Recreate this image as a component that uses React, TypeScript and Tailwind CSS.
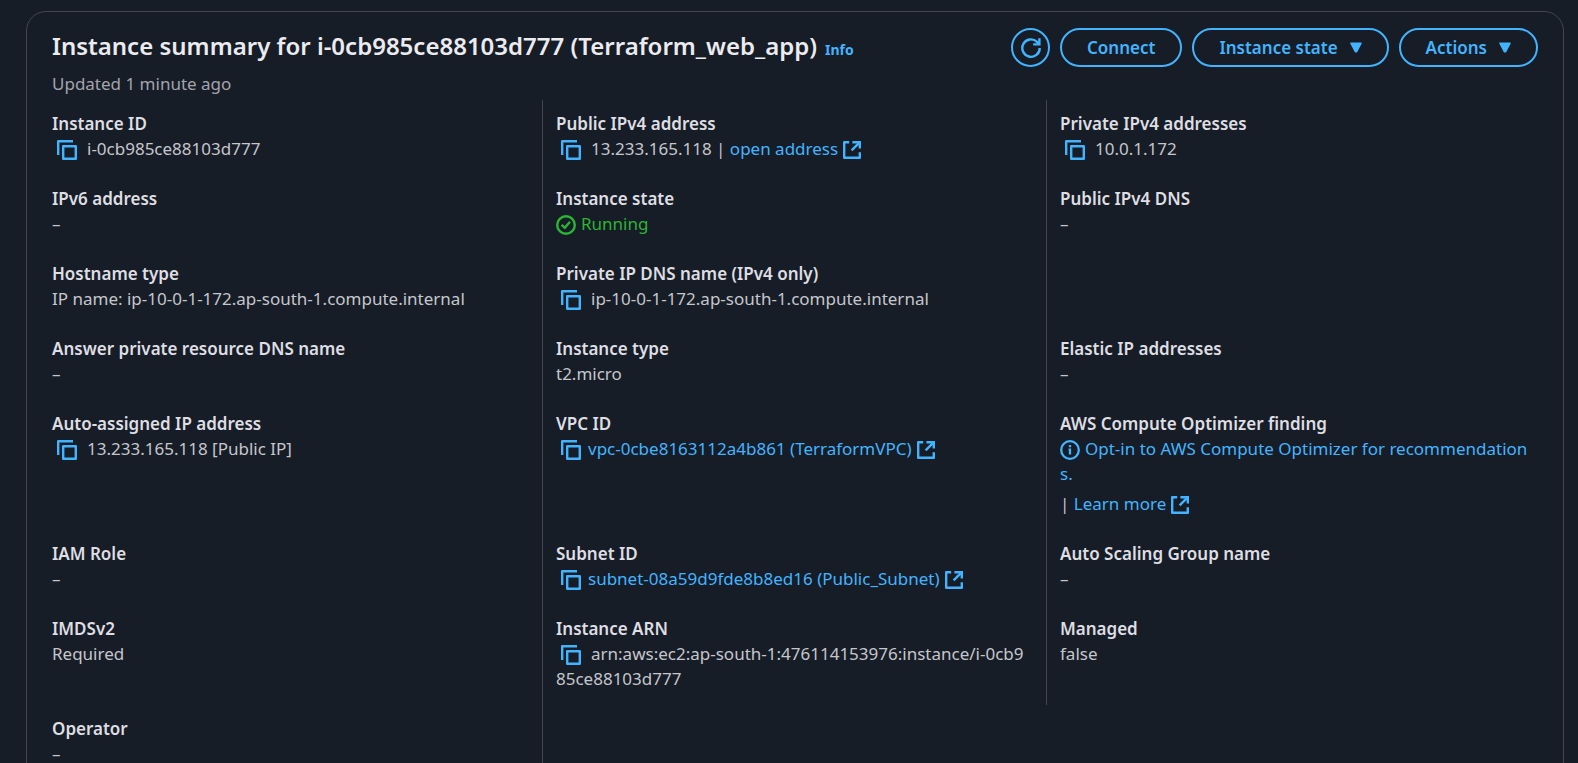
import type { ReactNode } from 'react';

function CopyButton({ label }: { label: string }) {
  return (
    <button type="button" aria-label={`Copy ${label}`} className="ml-[5px] inline-block size-5 align-[-5px] text-[#42b4ff]">
      <svg viewBox="0 0 20 20" fill="none" stroke="currentColor" strokeWidth="2.4" strokeLinejoin="round" className="block size-5">
        <path d="M1.2 15V1.2H16" />
        <path d="M6.2 6.2h12.6v12.6H6.2z" />
      </svg>
    </button>
  );
}

function Copyable({ label, text }: { label: string; text: string }) {
  return (
    <>
      <CopyButton label={label} />
      <span className="ml-[10px]">{text}</span>
    </>
  );
}

function CopyableLink({ label, text }: { label: string; text: string }) {
  return (
    <>
      <CopyButton label={label} />
      <span className="ml-[7px]">
        <Link external>{text}</Link>
      </span>
    </>
  );
}

function ExternalIcon() {
  return (
    <svg viewBox="0 0 18 18" fill="none" stroke="currentColor" strokeWidth="2.4" className="ml-[5px] inline-block size-[18px] align-[-4px]">
      <path d="M6.2 1.2h-5v15.6h15.6V11.2" strokeLinejoin="round" />
      <path d="M9.4 1.2h7.4v6.3" />
      <path d="M16.4 1.6 8.6 9.4" />
    </svg>
  );
}

function CheckIcon() {
  return (
    <svg viewBox="0 0 20 20" fill="none" stroke="currentColor" strokeWidth="2.4" className="mr-[5px] inline-block size-5 align-[-5px]">
      <circle cx="10" cy="10" r="8.8" />
      <path d="m5.6 9.9 3.2 2.9 5.2-6" />
    </svg>
  );
}

function InfoIcon() {
  return (
    <svg viewBox="0 0 20 20" fill="none" stroke="currentColor" strokeWidth="2.3" className="mr-[5px] inline-block size-5 align-[-5px]">
      <circle cx="10" cy="10" r="8.8" />
      <path d="M10 5v2.2M8.6 9.6H10M10 8.6v6" />
    </svg>
  );
}

function RefreshIcon() {
  return (
    <svg viewBox="0 0 20 20" fill="none" stroke="currentColor" strokeWidth="2.4" className="size-5">
      <path d="M18.7 10A8.7 8.7 0 1 1 16 3.8l2 2" />
      <path d="M18.4.2v6.2h-6.2" />
    </svg>
  );
}

function Caret() {
  return (
    <svg viewBox="0 0 12 11" fill="currentColor" stroke="currentColor" strokeWidth="1.6" strokeLinejoin="round" className="h-[11px] w-3">
      <path d="M1 1.2h10L6.6 9.6H5.4z" />
    </svg>
  );
}

function ActionButton({ children, menu }: { children: ReactNode; menu?: boolean }) {
  return (
    <button
      type="button"
      aria-haspopup={menu ? 'menu' : undefined}
      className="flex h-[39px] items-center gap-3 rounded-full border-2 border-[#42b4ff] px-[25px] text-[17px] font-semibold text-[#42b4ff]"
    >
      {children}
      {menu && <Caret />}
    </button>
  );
}

function Link({ children, external }: { children: ReactNode; external?: boolean }) {
  return (
    <a href="#" className="text-[#42b4ff]">
      {children}
      {external && <ExternalIcon />}
    </a>
  );
}

type Field = { label: string; value: ReactNode };

const rows: Field[][] = [
  [
    { label: 'Instance ID', value: <Copyable label="instance ID" text="i-0cb985ce88103d777" /> },
    {
      label: 'Public IPv4 address',
      value: <><Copyable label="public IPv4 address" text="13.233.165.118" /> | <Link external>open address</Link></>,
    },
    { label: 'Private IPv4 addresses', value: <Copyable label="private IPv4 address" text="10.0.1.172" /> },
  ],
  [
    { label: 'IPv6 address', value: '–' },
    { label: 'Instance state', value: <span className="text-[#2bb534]"><CheckIcon />Running</span> },
    { label: 'Public IPv4 DNS', value: '–' },
  ],
  [
    { label: 'Hostname type', value: 'IP name: ip-10-0-1-172.ap-south-1.compute.internal' },
    {
      label: 'Private IP DNS name (IPv4 only)',
      value: <Copyable label="private IP DNS name" text="ip-10-0-1-172.ap-south-1.compute.internal" />,
    },
    { label: '', value: '' },
  ],
  [
    { label: 'Answer private resource DNS name', value: '–' },
    { label: 'Instance type', value: 't2.micro' },
    { label: 'Elastic IP addresses', value: '–' },
  ],
  [
    { label: 'Auto-assigned IP address', value: <Copyable label="auto-assigned IP address" text="13.233.165.118 [Public IP]" /> },
    { label: 'VPC ID', value: <CopyableLink label="VPC ID" text="vpc-0cbe8163112a4b861 (TerraformVPC)" /> },
    {
      label: 'AWS Compute Optimizer finding',
      value: (
        <>
          <div>
            <Link><InfoIcon />Opt-in to AWS Compute Optimizer for recommendations.</Link>
          </div>
          <div className="mt-[5px]">
            | <Link external>Learn more</Link>
          </div>
        </>
      ),
    },
  ],
  [
    { label: 'IAM Role', value: '–' },
    { label: 'Subnet ID', value: <CopyableLink label="subnet ID" text="subnet-08a59d9fde8b8ed16 (Public_Subnet)" /> },
    { label: 'Auto Scaling Group name', value: '–' },
  ],
  [
    { label: 'IMDSv2', value: 'Required' },
    {
      label: 'Instance ARN',
      value: <Copyable label="instance ARN" text="arn:aws:ec2:ap-south-1:476114153976:instance/i-0cb985ce88103d777" />,
    },
    { label: 'Managed', value: 'false' },
  ],
  [{ label: 'Operator', value: '–' }],
];

export default function App() {
  return (
    <main className="min-h-screen bg-[#161d26] pt-[11px] pr-[14px] pl-[26px] font-['Noto_Sans',sans-serif] text-[17px] leading-[25px] text-[#c6c6cd]">
      <section className="rounded-[20px] border border-[#424650] px-3 pt-4 pb-6">
        <header className="px-[13px] pb-1">
          <div className="flex items-center justify-between gap-4">
            <div className="flex items-baseline gap-2 pb-[2px]">
              <h1 className="text-[24px] leading-[30px] font-semibold text-[#ebebf0]">
                Instance summary for i-0cb985ce88103d777 (Terraform_web_app)
              </h1>
              <a href="#" className="text-[14px] font-bold text-[#42b4ff]">Info</a>
            </div>
            <div className="flex shrink-0 gap-[10px]">
              <button
                type="button"
                aria-label="Refresh"
                className="flex size-[39px] items-center justify-center rounded-full border-2 border-[#42b4ff] text-[#42b4ff]"
              >
                <RefreshIcon />
              </button>
              <ActionButton>Connect</ActionButton>
              <ActionButton menu>Instance state</ActionButton>
              <ActionButton menu>Actions</ActionButton>
            </div>
          </div>
          <p className="mt-1 text-[#a4a4ad]">Updated 1 minute ago</p>
        </header>

        {rows.map((fields, r) => (
          <dl key={r} className="grid grid-cols-3">
            {fields.map((field, c) => (
              <div key={c} className="border-r border-[#424650] px-[13px] pt-[11px] pb-[14px] nth-3:border-r-0">
                <dt className="font-semibold text-[#dedee3]">{field.label}</dt>
                <dd className="break-all">{field.value}</dd>
              </div>
            ))}
          </dl>
        ))}
      </section>
    </main>
  );
}
